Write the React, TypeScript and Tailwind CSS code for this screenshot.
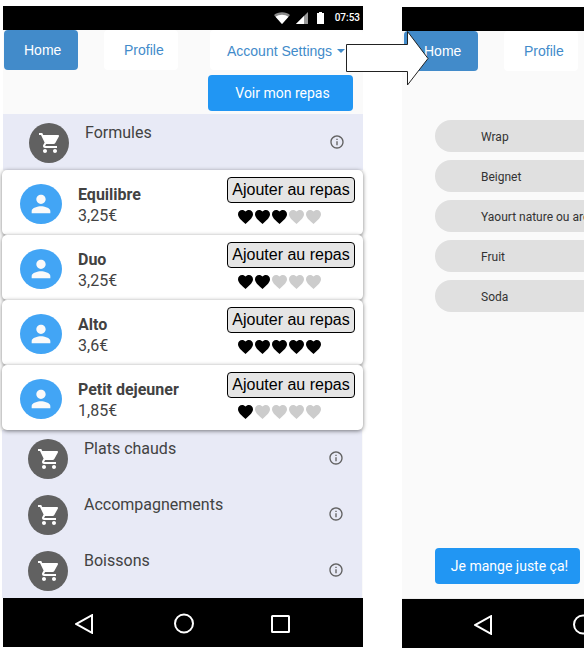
import type { ReactNode } from "react";

const HEART =
  "M12 21.35l-1.45-1.32C5.4 15.36 2 12.28 2 8.5 2 5.42 4.42 3 7.5 3c1.74 0 3.41.81 4.5 2.09C13.09 3.81 14.76 3 16.5 3 19.58 3 22 5.42 22 8.5c0 3.78-3.4 6.86-8.55 11.54L12 21.35z";

const meals = [
  { name: "Equilibre", price: "3,25€", rating: 3 },
  { name: "Duo", price: "3,25€", rating: 2 },
  { name: "Alto", price: "3,6€", rating: 5 },
  { name: "Petit dejeuner", price: "1,85€", rating: 1 },
];

const items = ["Wrap", "Beignet", "Yaourt nature ou aromatisé", "Fruit", "Soda"];

function StatusBar({ children }: { children?: ReactNode }) {
  return (
    <div className="flex h-6 items-center justify-end bg-black pr-[3px] text-white">
      {children}
    </div>
  );
}

function StatusIcons() {
  return (
    <>
      <svg className="mr-[6px] h-3 w-4" viewBox="0 0 16 12" aria-hidden="true">
        <path d="M0 3C4-.6 12-.6 16 3L8 12z" fill="#8a8a8a" />
        <path d="M1.500 4.700C5 2 11 2 14.500 4.700L8 12z" fill="#fff" />
      </svg>
      <svg className="mr-[9px] h-3 w-3" viewBox="0 0 12 12" aria-hidden="true">
        <path d="M0 12L12 0V12z" fill="#9a9a9a" />
        <path d="M0 12L8 4V12z" fill="#fff" />
      </svg>
      <svg className="mr-[11px] h-3 w-[7px]" viewBox="0 0 7 12" aria-hidden="true">
        <path d="M2 0h3v1h2v11H0V1h2z" fill="#fff" />
      </svg>
      <span className="text-[10px] font-medium leading-3">07:53</span>
    </>
  );
}

function Tabs({ children }: { children?: ReactNode }) {
  return (
    <nav className="flex h-10 pl-px font-['Liberation_Sans',Arial,sans-serif] text-sm">
      <a href="#home" className="flex w-[74px] items-center rounded bg-[#428bca] pl-5 text-white">
        Home
      </a>
      <a href="#profile" className="ml-[26px] flex w-[74px] items-center rounded bg-white pl-5 text-[#428bca]">
        Profile
      </a>
      {children}
    </nav>
  );
}

function NavBar() {
  return (
    <div className="flex h-[49px] items-center justify-center gap-[78px] bg-black pt-[2px]">
      <button type="button" aria-label="Retour">
        <svg className="size-5" viewBox="0 0 20 20" fill="none" stroke="#fff" strokeWidth="2">
          <path d="M17 1.200V18.800L1 10z" />
        </svg>
      </button>
      <button type="button" aria-label="Accueil">
        <svg className="size-5 overflow-visible" viewBox="0 0 20 20" fill="none" stroke="#fff" strokeWidth="2">
          <circle cx="11" cy="9.500" r="9" />
        </svg>
      </button>
      <button type="button" aria-label="Applications">
        <svg className="size-5" viewBox="0 0 20 20" fill="none" stroke="#fff" strokeWidth="2">
          <rect x="1" y="2" width="17" height="16" rx="0.500" />
        </svg>
      </button>
    </div>
  );
}

function Category({ label }: { label: string }) {
  return (
    <div className="flex h-14 items-start bg-[#e8eaf6] pl-[26px] pr-[18px]">
      <span className="mt-[9px] flex size-10 items-center justify-center rounded-full bg-[#616161] pl-[2px]">
        <svg className="size-6" viewBox="0 0 24 24" fill="#fff" aria-hidden="true">
          <path d="M7 18c-1.100 0-1.990.9-1.990 2S5.900 22 7 22s2-.9 2-2-.9-2-2-2zM1 2v2h2l3.600 7.590-1.350 2.450c-.16.28-.25.61-.25.96 0 1.100.9 2 2 2h12v-2H7.420c-.14 0-.25-.11-.25-.25l.03-.12.9-1.630h7.450c.75 0 1.410-.41 1.750-1.030l3.580-6.490c.08-.14.12-.31.12-.48 0-.55-.45-1-1-1H5.210l-.94-2H1zm16 16c-1.100 0-1.990.9-1.990 2s.89 2 1.990 2 2-.9 2-2-.9-2-2-2z" />
        </svg>
      </span>
      <span className="ml-4 mt-[9px] flex-1 text-base leading-5 text-[#424242]">{label}</span>
      <button type="button" aria-label={`Informations ${label}`} className="mt-5 flex">
        <svg className="size-4" viewBox="0 0 24 24" fill="#616161" aria-hidden="true">
          <path d="M11 17h2v-6h-2v6zm1-15C6.480 2 2 6.480 2 12s4.480 10 10 10 10-4.480 10-10S17.520 2 12 2zm0 18c-4.410 0-8-3.590-8-8s3.590-8 8-8 8 3.590 8 8-3.590 8-8 8zM11 9h2V7h-2v2z" />
        </svg>
      </button>
    </div>
  );
}

function MealCard({ name, price, rating }: (typeof meals)[number]) {
  return (
    <li className="flex h-[65px] items-start rounded-[5px] bg-white pl-[18px] pr-2 shadow-[0_1px_4px_rgba(0,0,0,0.5)]">
      <span className="mt-[14px] flex h-10 w-[42px] items-center justify-center rounded-[50%] bg-[#42a5f5]">
        <svg className="size-7" viewBox="0 0 24 24" fill="#fafafa" aria-hidden="true">
          <path d="M12 12c2.210 0 4-1.790 4-4s-1.790-4-4-4-4 1.790-4 4 1.790 4 4 4zm0 2c-2.670 0-8 1.340-8 4v2h16v-2c0-2.660-5.330-4-8-4z" />
        </svg>
      </span>
      <div className="ml-4 mt-[14px] flex-1 text-base leading-[21px] text-[#424242]">
        <h3 className="font-bold">{name}</h3>
        <p>{price}</p>
      </div>
      <div className="mt-[7px]">
        <button
          type="button"
          className="flex h-[26px] w-32 items-center justify-center whitespace-nowrap rounded border border-black bg-[#e5e5e5] font-['Liberation_Sans',Arial,sans-serif] text-base text-black"
        >
          Ajouter au repas
        </button>
        <div className="ml-[11px] mt-[7px] flex gap-[2px]" role="img" aria-label={`${rating} sur 5`}>
          {[1, 2, 3, 4, 5].map((n) => (
            <svg
              key={n}
              className={n <= rating ? "h-[14px] w-[15px] fill-black" : "h-[14px] w-[15px] fill-[#ccc]"}
              viewBox="2 3 20 18.350"
              preserveAspectRatio="none"
            >
              <path d={HEART} />
            </svg>
          ))}
        </div>
      </div>
    </li>
  );
}

function ActionButton({ children }: { children: ReactNode }) {
  return (
    <button
      type="button"
      className="h-9 w-[145px] whitespace-nowrap rounded-sm bg-[#2196f3] pl-1 text-sm text-white"
    >
      {children}
    </button>
  );
}

export default function App() {
  return (
    <main className="relative flex items-start overflow-hidden bg-white pb-[6px] pl-[3px] pr-[3px] font-[Roboto,sans-serif]">
      <section className="mt-[6px] w-[360px] shrink-0 bg-[#fafafa]">
        <StatusBar>
          <StatusIcons />
        </StatusBar>
        <Tabs>
          <a
            href="#settings"
            className="ml-8 flex flex-1 items-center gap-[5px] whitespace-nowrap rounded bg-white pl-[17px] pt-[2px] text-[#428bca]"
          >
            Account Settings
            <svg className="h-1 w-2 shrink-0" viewBox="0 0 8 4" fill="currentColor" aria-hidden="true">
              <path d="M0 0h8L4 4z" />
            </svg>
          </a>
        </Tabs>
        <div className="flex h-11 items-center justify-end pb-[3px] pr-[10px] pt-[5px]">
          <ActionButton>Voir mon repas</ActionButton>
        </div>
        <Category label="Formules" />
        <ul className="relative -ml-px">
          {meals.map((meal) => (
            <MealCard key={meal.name} {...meal} />
          ))}
        </ul>
        <div className="-ml-px mr-px">
          <Category label="Plats chauds" />
          <Category label="Accompagnements" />
          <Category label="Boissons" />
        </div>
        <NavBar />
      </section>

      <section className="-mb-px ml-[39px] mt-[7px] min-w-0 max-w-[360px] flex-1 self-stretch overflow-hidden">
        <div className="flex h-full w-[360px] flex-col bg-[#fafafa]">
          <StatusBar />
          <div className="pl-px">
            <Tabs />
          </div>
          <ul className="mt-[49px] flex flex-col gap-2 pl-[33px]">
            {items.map((item) => (
              <li
                key={item}
                className="flex h-8 w-[294px] items-center rounded-full bg-[#e0e0e0] pl-[46px] pt-px text-xs text-[#333]"
              >
                {item}
              </li>
            ))}
          </ul>
          <div className="mt-auto border-b border-[#eee] pb-[14px] pl-[33px]">
            <ActionButton>Je mange juste ça!</ActionButton>
          </div>
          <NavBar />
        </div>
      </section>

      <svg
        className="absolute left-[346px] top-[30px] h-14 w-[84px]"
        viewBox="0 0 84 56"
        fill="#fff"
        stroke="#222"
        aria-hidden="true"
      >
        <path d="M.5 14.500H61.500V1.500L82 28.500L61.500 55V41.500H.5z" />
      </svg>
    </main>
  );
}
